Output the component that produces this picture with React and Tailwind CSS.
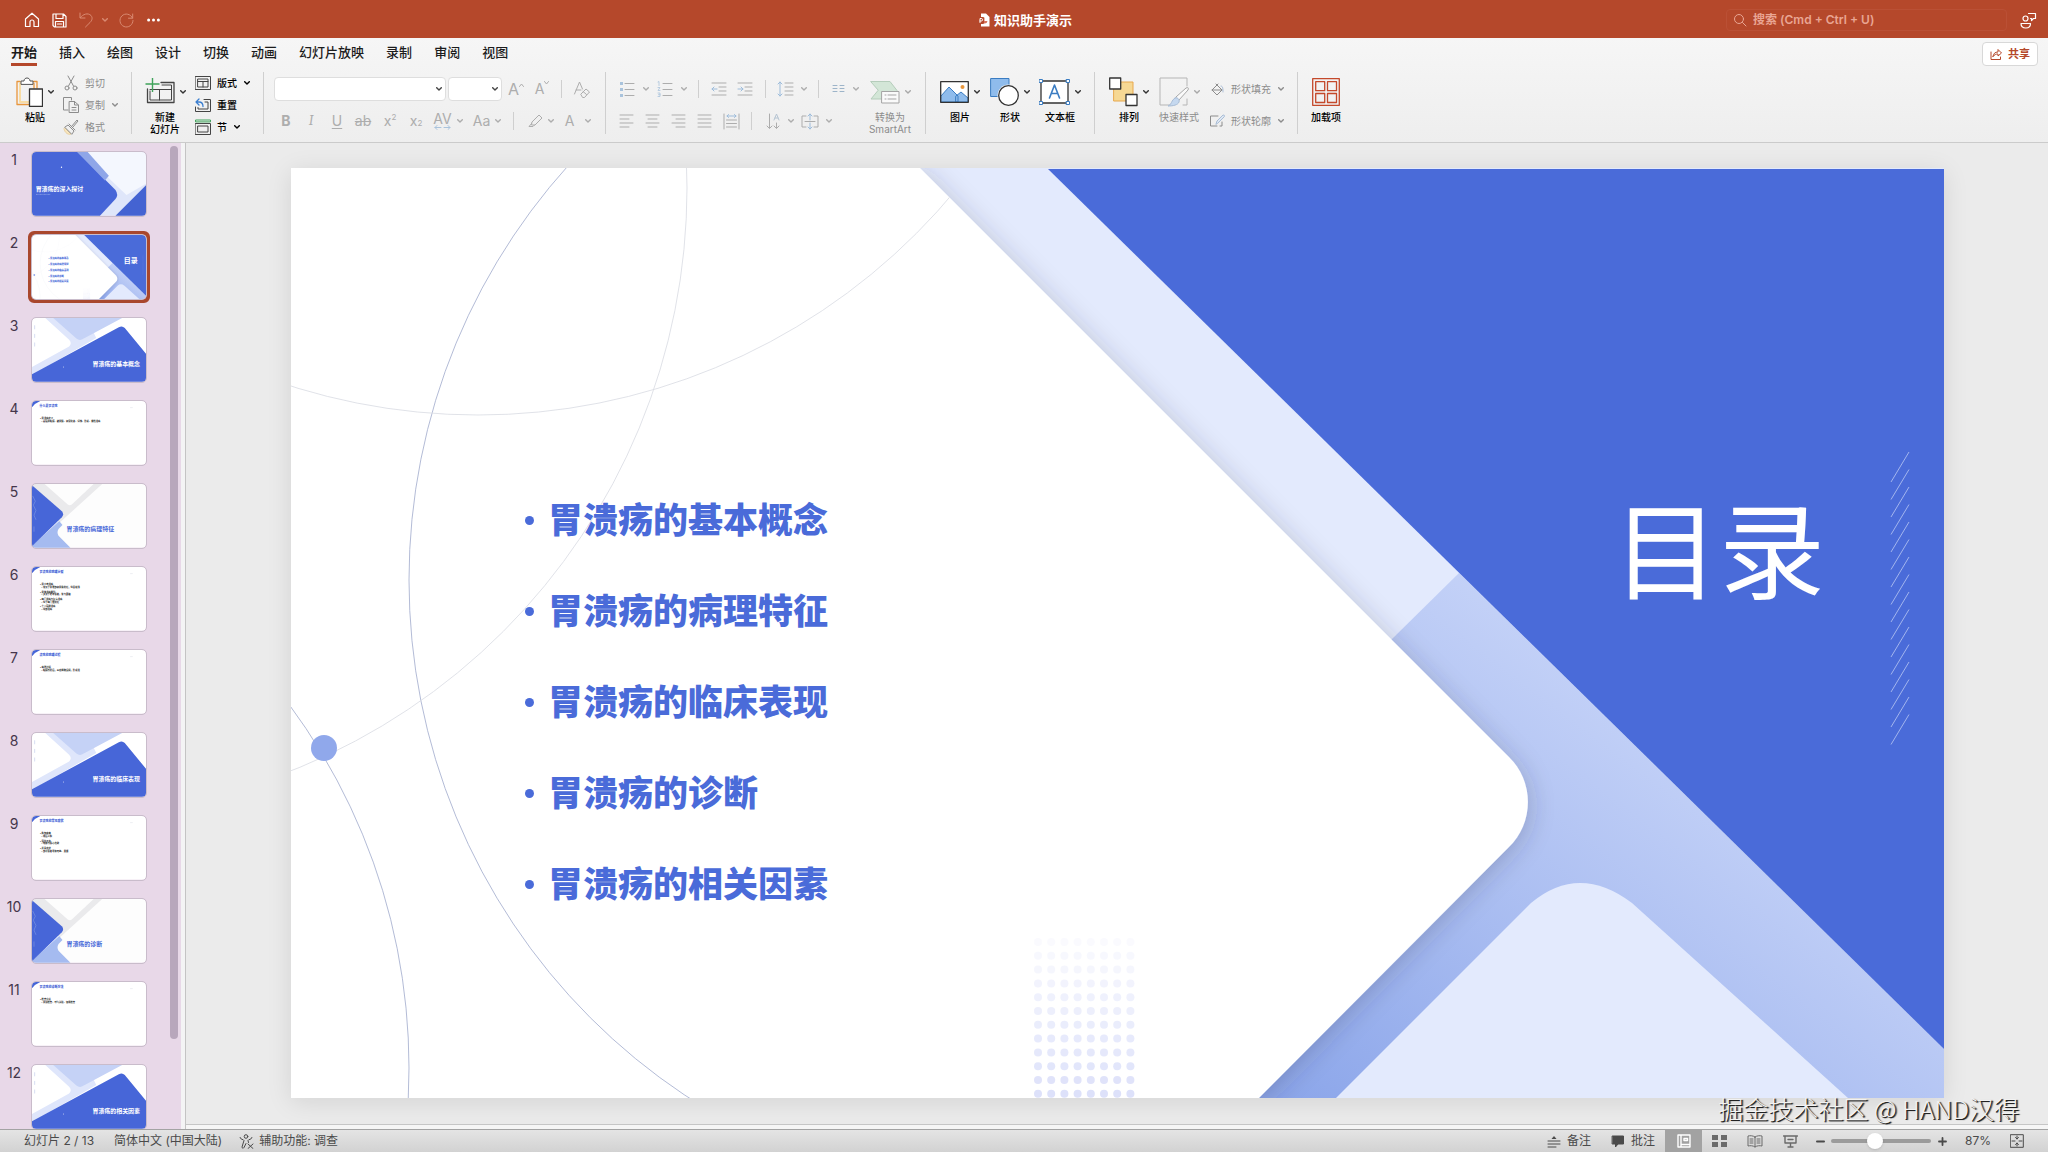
import React from "react";

const Svg = ({ w, h, className = "", children }) => (
  <svg
    width={w}
    height={h}
    viewBox={`0 0 ${w} ${h}`}
    fill="none"
    stroke="currentColor"
    strokeLinecap="round"
    strokeLinejoin="round"
    aria-hidden="true"
    className={`shrink-0 ${className}`}
  >
    {children}
  </svg>
);

const Chevron = ({ className = "" }) => (
  <Svg w={6} h={4} className={className}>
    <path d="M.7.7 3 3 5.3.7" strokeWidth="1.4" />
  </Svg>
);

const Divider = () => <div className="w-px h-[62px] shrink-0 bg-[#cfcfcf]" />;
const SmallDivider = ({ className = "" }) => <div className={`w-px h-[18px] shrink-0 bg-[#cfcfcf] ${className}`} />;

// Tall ribbon button: icon with an optional arrow, label underneath
const BigTool = ({ icon, label, arrow = true, disabled, className = "" }) => (
  <button
    type="button"
    disabled={disabled}
    className={`flex flex-col items-center shrink-0 pt-[5px] text-[10px] leading-3 ${disabled ? "text-[#8c8c8c]" : "text-black font-medium"} ${className}`}
  >
    <span className="flex items-center gap-[5px] h-[30px]">
      {icon}
      {arrow && <Chevron className={disabled ? "text-[#a8a8a8]" : "text-[#333]"} />}
    </span>
    <span className="mt-1 whitespace-pre-line">{label}</span>
  </button>
);

const RowTool = ({ icon, label, arrow, disabled, className = "" }) => (
  <button
    type="button"
    disabled={disabled}
    className={`flex items-center h-[22px] gap-[6px] text-[10px] leading-3 whitespace-nowrap ${disabled ? "text-[#8c8c8c]" : "text-black font-medium"} ${className}`}
  >
    {icon}
    <span>{label}</span>
    {arrow && <Chevron className="ml-px" />}
  </button>
);

const Tool = ({ label, className = "", children }) => (
  <button
    type="button"
    aria-label={label}
    disabled
    className={`flex items-center justify-center shrink-0 h-6 text-[14px] leading-4 text-[#adadad] ${className}`}
  >
    {children}
  </button>
);

const TitleBar = () => (
  <header className="relative flex items-center h-[38px] shrink-0 pt-[2px] bg-[#b5482b] text-white">
    <div className="flex items-center pl-6">
      <button type="button" aria-label="主页">
        <Svg w={16} h={16}>
          <path d="M1.5 7 8 1.2 14.500 7v7.500H10V10a2 2 0 0 0-4 0v4.500H1.500z" strokeWidth="1.2" />
        </Svg>
      </button>
      <button type="button" aria-label="保存" className="ml-3">
        <Svg w={15} h={15}>
          <path d="M1 1h10.500L14 3.500V14H2.500L1 12.500zM4 1v4.500h7V1M3.500 14V8.500h8V14M5.500 11h4" strokeWidth="1.200" />
        </Svg>
      </button>
      <button type="button" aria-label="撤消" className="ml-3 text-[#d98a72]">
        <Svg w={14} h={16}>
          <path d="M1 1v5h5M1.300 5.700C4 2 9 .5 12 3.500c2 2.500 1 5-1 7L6.500 15" />
        </Svg>
      </button>
      <button type="button" aria-label="撤消选项" className="ml-[9px] text-[#d98a72]">
        <Chevron />
      </button>
      <button type="button" aria-label="恢复" className="ml-[11px] text-[#d98a72]">
        <Svg w={15} h={15}>
          <path d="M13.500 5A6.500 6.500 0 1 0 14 7.500M13.700 1v4.200H9.500" />
        </Svg>
      </button>
      <button type="button" aria-label="更多" className="ml-[13px]">
        <Svg w={13} h={4}>
          <g fill="currentColor" stroke="none">
            <circle cx="1.600" cy="2" r="1.500" />
            <circle cx="6.500" cy="2" r="1.500" />
            <circle cx="11.400" cy="2" r="1.500" />
          </g>
        </Svg>
      </button>
    </div>
    <h1 className="absolute inset-x-0 top-[10px] flex items-center justify-center gap-1 pl-[2px] text-[13px] leading-5 font-bold pointer-events-none">
      <Svg w={12} h={14}>
        <path d="M3 .5h5L11.500 4v9.500H3z" fill="#fff" stroke="none" />
        <path d="M6.500 4.500a3 3 0 1 0 3 3.500h-3z" fill="#d9735a" stroke="none" />
        <rect y="4" width="6" height="7" rx="1" fill="#b5482b" stroke="none" />
        <path d="M2 9.500v-4h1.300a1.200 1.200 0 0 1 0 2.500H2" stroke="#fff" strokeWidth="1" />
      </Svg>
      知识助手演示
    </h1>
    <label className="ml-auto mr-[13px] flex items-center w-[281px] h-[22px] pl-[6px] gap-[6px] rounded border border-[#ba5035] text-[#e9a593]">
      <Svg w={14} h={14}>
        <circle cx="6" cy="6" r="4.500" />
        <path d="m9.500 9.500 3.500 3.500" />
      </Svg>
      <input
        type="search"
        aria-label="搜索"
        placeholder="搜索 (Cmd + Ctrl + U)"
        className="flex-1 min-w-0 bg-transparent outline-none text-[12px] font-semibold placeholder:text-[#e9a593]"
      />
    </label>
    <button type="button" aria-label="账户" className="mr-[11px]">
      <Svg w={17} h={17}>
        <path d="M8.500 1.500h7v5h-2l-2 2V6.500h-1M1 11.500h9.500c0 3-2 4.500-4.700 4.500S1 14.500 1 11.500z" strokeWidth="1.200" />
        <circle cx="5.500" cy="6.500" r="2.500" strokeWidth="1.200" />
      </Svg>
    </button>
  </header>
);

const tabs = ["开始", "插入", "绘图", "设计", "切换", "动画", "幻灯片放映", "录制", "审阅", "视图"];

const TabBar = () => (
  <nav className="flex items-start h-[30px] pl-[11px] pr-[10px] pt-1">
    <div className="flex gap-[22px]">
      {tabs.map((tab, i) => (
        <a
          key={tab}
          href="#"
          className={`h-6 text-[13px] leading-5 text-[#1c1c1c] border-b-[3px] ${i === 0 ? "font-bold border-[#b5482b]" : "font-medium border-transparent"}`}
        >
          {tab}
        </a>
      ))}
    </div>
    <button
      type="button"
      className="ml-auto flex items-center justify-center gap-[6px] w-14 h-6 bg-white border border-[#d8d8d8] rounded text-[11px] leading-4 font-bold text-[#b5482b]"
    >
      <Svg w={12} h={12}>
        <path d="M1 4v7.500h9.500V9M3 8.500C3.500 5.500 5 4 8 4V1.500L11.500 5 8 8V6C6 6 4.500 6.500 3 8.500z" />
      </Svg>
      共享
    </button>
  </nav>
);

const lineSets = {
  left: "M1 2h13M1 6h9M1 10h13M1 14h9",
  center: "M1 2h13M3 6h9M1 10h13M3 14h9",
  right: "M1 2h13M5 6h9M1 10h13M5 14h9",
  full: "M1 2h13M1 6h13M1 10h13M1 14h13",
};

const Lines = ({ kind }) => (
  <Svg w={15} h={16}>
    <path d={lineSets[kind]} />
  </Svg>
);

const ClipboardGroup = () => (
  <div className="flex w-[131px] pl-[16px]">
    <BigTool
      label="粘贴"
      className="w-[38px]"
      icon={
        <Svg w={27} h={30}>
          <path d="M4 4.500H1v23h12" stroke="#e8963c" strokeWidth="1.300" />
          <path d="M4 6v19h9" stroke="#f8dca4" strokeWidth="2" />
          <path d="M17 4.500h4V11M18 6.500V11" stroke="#e8963c" strokeWidth="1.300" />
          <path d="M5 7V4h3c0-4 6-4 6 0h3v3z" fill="#fff" stroke="#555" />
          <path d="M13.500 12h13v17.500h-13z" fill="#fff" stroke="#333" strokeWidth="1.300" />
        </Svg>
      }
    />
    <div className="ml-[9px]">
      <RowTool
        disabled
        label="剪切"
        icon={
          <Svg w={16} h={16}>
            <path d="m5 1 5.500 10M11 1 5.500 11" />
            <circle cx="4" cy="13" r="2" />
            <circle cx="12" cy="13" r="2" />
          </Svg>
        }
      />
      <RowTool
        disabled
        arrow
        label="复制"
        icon={
          <Svg w={16} h={16}>
            <path d="M5 13H.5V.5h8V3M6.500 4.500h5L15.500 8v7.500h-9zM11.500 4.500V8h4M9 10.500h4M9 13h4" />
          </Svg>
        }
      />
      <RowTool
        disabled
        label="格式"
        icon={
          <Svg w={16} h={16}>
            <path d="m2 9 6 6c-3 1-6-1-7-5z" fill="#f8e6bd" stroke="#e8cfa0" />
            <path d="m2 8 3-2 6 6-2 3zM6 5l6 6M8.500 7.500 14 1l1 1-5 6" />
          </Svg>
        }
      />
    </div>
  </div>
);

const SlidesGroup = () => (
  <div className="flex w-[131px] pl-[12px]">
    <BigTool
      label={"新建\n幻灯片"}
      className="w-[42px]"
      icon={
        <Svg w={30} h={30} className="text-[#444]">
          <path d="M16 5.500h13v20H2.500V12" strokeWidth="1.300" />
          <path d="M17 8h9.500v15H5V14M5 12.500h21.500M14.500 12.500V23" />
          <path d="M7.500 1v14M.5 7h14" stroke="#3fa35a" strokeWidth="1.400" strokeLinecap="butt" />
        </Svg>
      }
    />
    <div className="ml-[9px]">
      <RowTool
        arrow
        label="版式"
        icon={
          <Svg w={16} h={14} className="text-[#444]">
            <path d="M.5.5h15v13H.5zM3 3h10v8H3zM3 5.500h10M8 5.500V11" />
          </Svg>
        }
      />
      <RowTool
        label="重置"
        icon={
          <Svg w={16} h={14} className="text-[#444]">
            <path d="M9 1.500h6.500v12H.5V9M10 4h3v7H3V9.500" />
            <path d="M4 1 1 4l3 3M1 4h3c3 0 4 1.500 4 4.500" stroke="#3c7fd0" strokeWidth="1.300" />
          </Svg>
        }
      />
      <RowTool
        arrow
        label="节"
        icon={
          <Svg w={16} h={16} className="text-[#444]">
            <path d="M.5 2.500V1h15v1.500z" stroke="#3fa35a" />
            <path d="M.5 4.500h15v11H.5zM3 7h10v6H3z" />
          </Svg>
        }
      />
    </div>
  </div>
);

const FontGroup = () => (
  <div className="w-[341px] pl-[10px] pt-px">
    <div className="flex items-center h-8">
      <div className="relative w-[172px]">
        <select aria-label="字体" className="appearance-none block w-full h-6 bg-white border border-[#dedede] rounded-sm" />
        <Chevron className="absolute right-1 top-[10px] text-[#444]" />
      </div>
      <div className="relative w-[54px] ml-[2px]">
        <select aria-label="字号" className="appearance-none block w-full h-6 bg-white border border-[#dedede] rounded-sm" />
        <Chevron className="absolute right-1 top-[10px] text-[#444]" />
      </div>
      <Tool label="增大字号" className="w-7 text-[16px]">
        A<Svg w={5} h={4} className="mb-2"><path d="m.5 3.500 2-2.500 2 2.500" /></Svg>
      </Tool>
      <Tool label="减小字号" className="w-6">
        A<Svg w={5} h={4} className="mb-3"><path d="m.5.5 2 2.500 2-2.500" /></Svg>
      </Tool>
      <SmallDivider className="ml-[7px]" />
      <Tool label="清除格式" className="ml-[11px] w-[18px]">
        <Svg w={18} h={17}>
          <path d="M1.500 13 6.500 1l3 7M3 9h5M8 13l5-5 3.500 3-5 5.500H10zM10 10.500l3.500 3" />
        </Svg>
      </Tool>
    </div>
    <div className="flex items-center h-8">
      <Tool label="加粗" className="w-6 font-bold">B</Tool>
      <Tool label="倾斜" className="w-[26px] italic font-serif">I</Tool>
      <Tool label="下划线" className="w-[26px] underline underline-offset-2">U</Tool>
      <Tool label="删除线" className="w-[26px] text-[13px] line-through">ab</Tool>
      <Tool label="上标" className="w-7">x<sup className="text-[8px]">2</sup></Tool>
      <Tool label="下标" className="w-6">x<sub className="text-[8px]">2</sub></Tool>
      <Tool label="字符间距" className="w-[40px] gap-[5px] text-[12px]">
        <span className="flex flex-col items-center leading-3">
          AV
          <Svg w={17} h={5} className="text-[#a9c3dc]"><path d="M1 2.500h6M3 .5l-2 2 2 2M10 2.500h6M14 .5l2 2-2 2" /></Svg>
        </span>
        <Chevron />
      </Tool>
      <Tool label="更改大小写" className="w-[38px] gap-[5px]">Aa<Chevron /></Tool>
      <SmallDivider className="ml-[7px]" />
      <Tool label="突出显示" className="w-[38px] ml-2 gap-[5px]">
        <Svg w={15} h={14}>
          <path d="m4 8 7-7 3 3-7 7H4zM4 9l-3 3.500h4L6.500 11" />
        </Svg>
        <Chevron />
      </Tool>
      <Tool label="字体颜色" className="w-9 gap-[11px]">A<Chevron /></Tool>
    </div>
  </div>
);

const ParagraphGroup = () => (
  <div className="flex w-[319px] pl-[13px]">
    <div className="w-[246px] pt-px">
      <div className="flex items-center h-8">
        <Tool label="项目符号" className="gap-2">
          <Svg w={16} h={16}>
            <path d="M6 2.500h9M6 8.500h9M6 14.500h9" />
            <g fill="#a9c3dc" stroke="none"><path d="M1 1h3v3H1zM1 7h3v3H1zM1 13h3v3H1z" /></g>
          </Svg>
          <Chevron />
        </Tool>
        <Tool label="编号" className="gap-2 ml-2">
          <Svg w={16} h={16}>
            <path d="M6 2.500h9M6 8.500h9M6 14.500h9" />
            <path d="m1 1 1-.5v4M1 6.500h2L1 9.500h2M1 12h2v3.500H1M1.500 13.700H3" stroke="#a9c3dc" strokeWidth=".8" />
          </Svg>
          <Chevron />
        </Tool>
        <SmallDivider className="ml-[11px]" />
        <Tool label="减少缩进" className="ml-3">
          <Svg w={16} h={16}>
            <path d="M1 2h14M8 6h7M8 10h7M1 14h14" />
            <path d="M6 8H1M3 6 1 8l2 2" stroke="#9dbcdb" />
          </Svg>
        </Tool>
        <Tool label="增加缩进" className="ml-[10px]">
          <Svg w={16} h={16}>
            <path d="M1 2h14M8 6h7M8 10h7M1 14h14" />
            <path d="M1 8h5M4 6l2 2-2 2" stroke="#9dbcdb" />
          </Svg>
        </Tool>
        <SmallDivider className="ml-3" />
        <Tool label="行距" className="gap-[7px] ml-[11px]">
          <Svg w={17} h={16}>
            <path d="M8 2h8M8 6h8M8 10h8M8 14h8" />
            <path d="M3 1v14M1 3l2-2 2 2M1 13l2 2 2-2" stroke="#9dbcdb" />
          </Svg>
          <Chevron />
        </Tool>
        <SmallDivider className="ml-[11px]" />
        <Tool label="分栏" className="gap-2 ml-[13px]">
          <Svg w={13} h={10}>
            <path d="M1 1.500h4M1 4.500h4M1 7.500h4M8 1.500h4M8 4.500h4M8 7.500h4" stroke="#9db4c9" />
          </Svg>
          <Chevron />
        </Tool>
      </div>
      <div className="flex items-center h-8">
        <Tool label="左对齐"><Lines kind="left" /></Tool>
        <Tool label="居中" className="ml-[11px]"><Lines kind="center" /></Tool>
        <Tool label="右对齐" className="ml-[11px]"><Lines kind="right" /></Tool>
        <Tool label="两端对齐" className="ml-[11px]"><Lines kind="full" /></Tool>
        <Tool label="分散对齐" className="ml-[11px]">
          <Svg w={17} h={17}>
            <path d="M1 1v15M16 1v15M3.500 7h10M3.500 10.500h10M3.500 14h10" />
            <path d="M4 3h9M5.500 1.500 4 3l1.500 1.500M11.500 1.500 13 3l-1.500 1.500" stroke="#9dbcdb" />
          </Svg>
        </Tool>
        <SmallDivider className="ml-[11px]" />
        <Tool label="文字方向" className="gap-[7px] ml-[14px]">
          <Svg w={15} h={17}>
            <path d="M3.500 1v14M1 13l2.500 2.500L6 13M10.500 10v5M8 13l2.500 2.500L13 13" />
            <path d="m8 7 2.500-6L13 7M9 5h3" stroke="#b5c4d2" />
          </Svg>
          <Chevron />
        </Tool>
        <Tool label="对齐文本" className="gap-[7px] ml-[7px]">
          <Svg w={18} h={17}>
            <path d="M5 3H1v11h4M13 3h4v11h-4M4 8.500h10" />
            <path d="M9 1v6M7 3l2-2 2 2M9 10v6M7 14l2 2 2-2" stroke="#9dbcdb" />
          </Svg>
          <Chevron />
        </Tool>
      </div>
    </div>
    <BigTool
      disabled
      label={"转换为\nSmartArt"}
      className="w-[50px]"
      icon={
        <Svg w={30} h={24}>
          <path d="M1 1.500h19l7 9-7 8.500H1l7-8.500z" fill="#d3e6d7" stroke="#b5cdbb" />
          <path d="M12 11.500h17V23H12z" fill="#fafafa" stroke="#a5a5a5" />
          <path d="M15 15h1M18 15h8M15 19h1M18 19h8" stroke="#a5a5a5" />
        </Svg>
      }
    />
  </div>
);

const InsertGroup = () => (
  <div className="flex w-[168px] pl-[13px]">
    <BigTool
      label="图片"
      className="w-[42px]"
      icon={
        <Svg w={29} h={22}>
          <path d="M.7.7h27.600v20.600H.7z" fill="#fff" stroke="none" />
          <path d="m1 15 8-9 9 9v6H1zM16 15l5-4 7 6v4H16z" fill="#8fbcec" stroke="#3a7cc2" />
          <circle cx="22.500" cy="6" r="2" fill="#e8963c" stroke="none" />
          <path d="M.7.7h27.600v20.600H.7z" stroke="#333" strokeWidth="1.300" />
        </Svg>
      }
    />
    <BigTool
      label="形状"
      className="w-[42px] ml-2"
      icon={
        <Svg w={29} h={30}>
          <path d="M1 1.500h18v18H1z" fill="#8fbcec" stroke="#3a7cc2" />
          <circle cx="18.500" cy="18.500" r="11" fill="#f2f2f2" stroke="none" />
          <circle cx="18.500" cy="18.500" r="9.800" fill="#fff" stroke="#333" strokeWidth="1.300" />
        </Svg>
      }
    />
    <BigTool
      label="文本框"
      className="w-[44px] ml-[7px]"
      icon={
        <Svg w={31} h={26}>
          <path d="M2 2h27v22H2z" fill="#fff" stroke="#333" strokeWidth="1.300" />
          <path d="m10.500 19 5-13 5 13M12.500 14.500h6" stroke="#3a7cc2" strokeWidth="1.600" />
          <path d="M.5.5h3v3h-3zM27.500.5h3v3h-3zM.5 22.500h3v3h-3zM27.500 22.500h3v3h-3z" fill="#fff" stroke="#3a7cc2" />
        </Svg>
      }
    />
  </div>
);

const DrawingGroup = () => (
  <div className="flex w-[202px] pl-[13px]">
    <BigTool
      label="排列"
      className="w-[42px]"
      icon={
        <Svg w={29} h={30}>
          <path d="M5 5h19v19H5z" fill="#f6d894" stroke="#e8a84c" />
          <path d="M.7 1h11v11H.7zM17 17.500h11v11H17z" fill="#fff" stroke="#333" strokeWidth="1.300" />
        </Svg>
      }
    />
    <BigTool
      disabled
      label="快速样式"
      className="w-[42px] ml-2"
      icon={
        <Svg w={30} h={30}>
          <path d="M14 28H1V1h27v8M28 22v6h-4" stroke="#b5b5b5" />
          <path d="M17 20 27 11c2-1 3 0 2 2l-9 10z" fill="#fafafa" stroke="#a8a8a8" />
          <path d="M16 21c2-1 5 1 4 4-1 3-6 4-11 4 4-1 3-6 7-8z" fill="#c5d8ef" stroke="#a9bdd6" />
        </Svg>
      }
    />
    <div className="ml-[10px] pt-px">
      <div className="flex items-center h-8">
        <RowTool
          disabled
          arrow
          label="形状填充"
          icon={
            <Svg w={15} h={14}>
              <path d="m6 2 6 6-5 5-5-5 6-6M2 8h10" />
              <path d="M11 4c2 0 2 3 2 6" stroke="#a9bdd6" />
            </Svg>
          }
        />
      </div>
      <div className="flex items-center h-8">
        <RowTool
          disabled
          arrow
          label="形状轮廓"
          icon={
            <Svg w={15} h={14}>
              <path d="M8 2H.5v10H7M12 8v4h-2" />
              <path d="m6 10 1-3 6-6c2 0 2 1 1 2L8 9z" fill="#dfe8f3" stroke="#a9bdd6" />
            </Svg>
          }
        />
      </div>
    </div>
  </div>
);

const Ribbon = () => (
  <section className="shrink-0 h-[105px] bg-linear-to-b from-[#f6f6f6] to-[#eeeeee] border-b border-[#cbcbcb]">
    <TabBar />
    <div className="flex items-start pt-1 h-[70px]">
      <ClipboardGroup />
      <Divider />
      <SlidesGroup />
      <Divider />
      <FontGroup />
      <Divider />
      <ParagraphGroup />
      <Divider />
      <InsertGroup />
      <Divider />
      <DrawingGroup />
      <Divider />
      <BigTool
        label="加载项"
        arrow={false}
        className="w-14"
        icon={
          <Svg w={28} h={28} className="text-[#c4492b]">
            <path d="M.7.7h26.600v26.600H.7zM3.700 3.700h9v9h-9zM15.500 3.700h9v9h-9zM3.700 15.500h9v9h-9zM15.500 15.500h9v9h-9z" strokeWidth="1.300" />
          </Svg>
        }
      />
    </div>
  </section>
);

const agenda = ["胃溃疡的基本概念", "胃溃疡的病理特征", "胃溃疡的临床表现", "胃溃疡的诊断", "胃溃疡的相关因素"];

const PANEL = "M0 0H629L1218 589A63 63 0 0 1 1218 679L968 930H0Z";

const AgendaArt = ({ id, children }) => (
  <svg viewBox="0 0 1653 930" className="block w-full h-auto" aria-hidden="true">
    <defs>
      <linearGradient id={`${id}-band`} gradientUnits="userSpaceOnUse" x1="1330" y1="480" x2="990" y2="930">
        <stop offset="0" stopColor="#c7d4f8" />
        <stop offset="1" stopColor="#8ca6ea" />
      </linearGradient>
      <clipPath id={`${id}-clip`}>
        <path d={PANEL} />
      </clipPath>
      <filter id={`${id}-shadow`} x="-5%" y="-5%" width="110%" height="110%">
        <feDropShadow dx="2" dy="4" stdDeviation="12" floodColor="#30344c" floodOpacity=".24" />
      </filter>
    </defs>
    <rect width="1653" height="930" fill="#e3eafd" />
    <path d="M1100 472 1168 405 1653 881V930H900Z" fill={`url(#${id}-band)`} />
    <path d="M757 1H1653V881Z" fill="#4a6bd9" />
    <path d={PANEL} fill="#fff" filter={`url(#${id}-shadow)`} />
    <path d="M1045 930 1240 735Q1288 695 1341 735L1557 930Z" fill="#e3eafd" />
    <g fill="none" clipPath={`url(#${id}-clip)`} strokeWidth=".8">
      <circle cx="737" cy="412" r="619" stroke="#a0aacb" />
      <circle cx="-493" cy="900" r="611" stroke="#a0aacb" />
      <circle cx="187" cy="-373" r="620" stroke="#d8dae2" />
      <circle cx="-231" cy="20" r="627" stroke="#d8dae2" />
    </g>
    <circle cx="33" cy="580" r="13" fill="#90a8eb" />
    {Array.from({ length: 12 }, (_, row) =>
      Array.from({ length: 8 }, (_, col) => (
        <circle key={`${row}-${col}`} cx={747 + col * 13.2} cy={774 + row * 13.800} r="4" fill="#dde1fa" opacity={(row + 2) / 13} />
      ))
    )}
    {Array.from({ length: 16 }, (_, i) => (
      <path key={i} d={`M1618 ${284 + i * 17.500}l-18 30`} stroke="#a3b5ee" />
    ))}
    {children}
  </svg>
);

const CoverArt = ({ title }) => (
  <>
    <rect width="344" height="192" fill="#dfe6fa" />
    <path d="M165 0H344V96L285 130 175 25Z" fill="#f4f7fe" />
    <path d="M0 0H137L252 115Q262 130 252 142L205 192H0Z" fill="#4766d8" />
    <path d="M137 0H168L232 72 220 86Z" fill="#8fa6e8" />
    <path d="M344 100V192H252Z" fill="#4463d2" />
    <circle cx="89" cy="46" r="2" fill="#fff" />
    <text x="11" y="118" fontSize="18" fontWeight="700" fill="#fff">{title}</text>
    <path d="M12 128h44" stroke="#b9c6f2" strokeWidth="1.500" strokeDasharray="3 1" />
  </>
);

const ChapterArt = ({ title }) => (
  <>
    <rect width="344" height="192" fill="#fff" />
    <path d="M40 0H66L150 64 185 42 194 60 0 172V148L112 86Q122 77 112 66Z" fill="#dfe6fb" />
    <path d="M64 0H272L152 64Q143 69 134 62Z" fill="#c5d2f6" />
    <path d="M0 170 262 28Q272 22 280 30L344 108V192H0Z" fill="#4766d8" />
    <path d="M8 22v12M8 48v12M8 74v12" stroke="#d8def2" strokeWidth="3" />
    <circle cx="95" cy="148" r="1.500" fill="#fff" />
    <text x="326" y="146" fontSize="18" fontWeight="700" fill="#fff" textAnchor="end">{title}</text>
  </>
);

const SectionArt = ({ title }) => (
  <>
    <rect width="344" height="192" fill="#fdfdfd" />
    <path d="M0 0H38L108 62Q114 67 120 62L186 0H212L84 116 0 20Z" fill="#eaeaec" />
    <path d="M0 186 82 112 92 124 80 136Q74 146 80 156L116 192H0Z" fill="#a5bbf0" />
    <path d="M0 4 90 82Q98 91 90 100L0 188Z" fill="#4766d8" />
    <path d="m2 36 8 16-6 12 8 16-6 14 6 14M6 128v16" stroke="#7d95e4" strokeWidth="2" fill="none" />
    <text x="104" y="142" fontSize="18" fontWeight="700" fill="#4a6bd9">{title}</text>
  </>
);

const ContentArt = ({ title, lines }) => (
  <>
    <rect width="344" height="192" fill="#fff" />
    <path d="M0 0H25Q10 6 0 19Z" fill="#4766d8" />
    <text x="23" y="19" fontSize="9" fontWeight="900" fill="#3f60d6">{title}</text>
    <path d="M296 20h8" stroke="#c8cbd6" />
    {lines.map((line, i) => (
      <text key={i} x={i % 2 ? 28 : 24} y={55 + Math.floor(i / 2) * 22 + (i % 2) * 9} fontSize="7" fontWeight="700" fill="#222">
        {i % 2 ? "– " : "• "}
        {line}
      </text>
    ))}
  </>
);

const AgendaThumb = () => (
  <AgendaArt id="thumb">
    {agenda.map((item, i) => (
      <text key={item} x="240" y={348 + i * 85} fontSize="34" fontWeight="900" fill="#4a6bd9">• {item}</text>
    ))}
    <text x="1330" y="410" fontSize="102" fontWeight="700" fill="#fff">目录</text>
  </AgendaArt>
);

const slides = [
  { kind: CoverArt, title: "胃溃疡的深入探讨" },
  { kind: AgendaThumb, title: "目录" },
  { kind: ChapterArt, title: "胃溃疡的基本概念" },
  { kind: ContentArt, title: "什么是胃溃疡", lines: ["胃溃疡定义", "是指胃黏膜、被胃酸、和消化液、侵蚀、形成、慢性溃疡"] },
  { kind: SectionArt, title: "胃溃疡的病理特征" },
  {
    kind: ContentArt,
    title: "胃溃疡的病理分型",
    lines: ["胃小弯溃疡", "常见于胃窦部和胃角附近，位置较浅", "胃体溃疡类型", "多见于老年患者，常与萎缩", "幽门溃疡与复合溃疡", "位于幽门管附近", "十二指肠溃疡", "球部溃疡"],
  },
  { kind: ContentArt, title: "溃疡的病理过程", lines: ["病理过程", "黏膜受损后，炎症细胞浸润，形成溃"] },
  { kind: ChapterArt, title: "胃溃疡的临床表现" },
  {
    kind: ContentArt,
    title: "胃溃疡的常见症状",
    lines: ["腹部疼痛", "餐后上腹", "消化不良", "饱胀与恶心食欲", "并发症状", "部分患者可有呕血、黑便"],
  },
  { kind: SectionArt, title: "胃溃疡的诊断" },
  { kind: ContentArt, title: "胃溃疡的诊断方法", lines: ["检查方法", "胃镜检查、呼气试验、钡餐检查"] },
  { kind: ChapterArt, title: "胃溃疡的相关因素" },
];

const ThumbnailPane = () => (
  <aside className="relative w-[181px] shrink-0 overflow-hidden bg-[#e8d8e8]">
    <ol className="pt-[9px]">
      {slides.map(({ kind: Art, title, lines }, i) => {
        const active = i === 1;
        return (
          <li key={i} className="flex items-start h-[83px]">
            <span className="w-7 shrink-0 text-center text-[14px] leading-4 text-[#45364b]">{i + 1}</span>
            <button
              type="button"
              aria-label={title}
              className={`w-[122px] shrink-0 -mt-1 rounded-md border-4 ${active ? "border-[#a9472d]" : "border-transparent"}`}
            >
              <span className="block rounded overflow-hidden outline outline-[#c9bccb]">
                {active ? (
                  <Art />
                ) : (
                  <svg viewBox="0 0 344 192" className="block w-full h-auto" aria-hidden="true">
                    <Art title={title} lines={lines} />
                  </svg>
                )}
              </span>
            </button>
          </li>
        );
      })}
    </ol>
    <div className="absolute right-[3px] top-[3px] w-2 h-[893px] rounded-full bg-[#b8a7bc]" />
  </aside>
);

const Slide = () => (
  <article className="relative bg-white shadow-[0_4px_24px_rgba(0,0,0,0.1)]">
    <AgendaArt id="slide" />
    <div className="absolute inset-0 flex items-start">
      <ul className="ml-[234px] mt-[329px] flex-1 text-[35px] leading-[46px] font-black text-[#4a6bd9]">
        {agenda.map((item) => (
          <li key={item} className="flex items-center gap-[14px] mb-[45px]">
            <span className="w-[9px] h-[9px] rounded-full bg-[#4a6bd9]" />
            {item}
          </li>
        ))}
      </ul>
      <h2 className="mr-[119px] mt-[325px] text-[106px] leading-[120px] text-white">目录</h2>
    </div>
  </article>
);

const StatusBar = () => (
  <footer className="flex items-center h-[23px] shrink-0 border-t border-[#a3a3a3] bg-linear-to-b from-[#e4e4e4] to-[#d2d2d2] text-[12px] leading-4 text-[#4a4a4a] whitespace-nowrap">
    <span className="pl-6">幻灯片 2 / 13</span>
    <button type="button" className="ml-5">简体中文 (中国大陆)</button>
    <button type="button" className="flex items-center gap-[5px] ml-[17px]">
      <Svg w={15} h={15}>
        <circle cx="7" cy="2.500" r="1.800" />
        <path d="M1 3.500c0 2 4 2 4 3L3 13c0 1.500 1.500 1.500 2 .5l2-4M13 3.500c0 2-4 2-4 3l.5 2M9 10l5 4.500M14 10l-5 4.500" />
      </Svg>
      辅助功能: 调查
    </button>
    <button type="button" className="flex items-center gap-[6px] ml-auto">
      <Svg w={14} h={13}>
        <path d="M1 6h12M1 9h12M1 12h8" />
        <path d="m4.500 4 2.500-3 2.500 3z" fill="currentColor" stroke="none" />
      </Svg>
      备注
    </button>
    <button type="button" className="flex items-center gap-[6px] ml-5">
      <Svg w={14} h={13}>
        <path d="M1.500 1h11v8H7l-2.500 3V9h-3z" fill="currentColor" />
      </Svg>
      批注
    </button>
    <button type="button" aria-label="普通视图" className="flex items-center justify-center w-[37px] h-full ml-[10px] bg-[#a2a2a2] text-white">
      <Svg w={14} h={14}>
        <path d="M1 1h12v12H1zM4 1v12M4 10.500h9M7 4.500h3.500v2H7z" strokeWidth="1.400" />
      </Svg>
    </button>
    <button type="button" aria-label="幻灯片浏览" className="ml-[10px] text-[#6a6a6a]">
      <Svg w={15} h={12}>
        <path d="M0 0h6v5H0zM9 0h6v5H9zM0 7h6v5H0zM9 7h6v5H9z" fill="currentColor" stroke="none" />
      </Svg>
    </button>
    <button type="button" aria-label="阅读视图" className="ml-5 text-[#6a6a6a]">
      <Svg w={16} h={13}>
        <path d="M8 2C6 .5 3 .5 1 1v10c2-.5 5-.5 7 1 2-1.500 5-1.500 7-1V1c-2-.5-5-.5-7 1zv10M3 4h3M3 6h3M3 8h3M10 4h3M10 6h3M10 8h3" />
      </Svg>
    </button>
    <button type="button" aria-label="幻灯片放映" className="ml-5 text-[#6a6a6a]">
      <Svg w={15} h={13}>
        <path d="M.5 1h14M2 1v7h11V1M5 4.500h5M7.500 8v3M5 12h5" strokeWidth="1.400" />
      </Svg>
    </button>
    <button type="button" aria-label="缩小" className="ml-[18px]">
      <Svg w={9} h={9}><path d="M1 4.500h7" strokeWidth="2" /></Svg>
    </button>
    <input
      type="range"
      aria-label="缩放"
      min="0"
      max="100"
      defaultValue="43"
      className="appearance-none w-[100px] h-1 ml-[6px] rounded-full bg-[#9b9b9b] [&::-webkit-slider-thumb]:appearance-none [&::-webkit-slider-thumb]:size-4 [&::-webkit-slider-thumb]:rounded-full [&::-webkit-slider-thumb]:bg-white [&::-webkit-slider-thumb]:shadow"
    />
    <button type="button" aria-label="放大" className="ml-[7px]">
      <Svg w={9} h={9}><path d="M1 4.500h7M4.500 1v7" strokeWidth="1.800" /></Svg>
    </button>
    <span className="ml-[18px] w-7">87%</span>
    <button type="button" aria-label="适应窗口" className="ml-[17px] mr-6">
      <Svg w={14} h={14}>
        <path d="M.7.7h12.600v12.600H.7zM7 2v3M5.500 3.500 7 5l1.500-1.500M7 12V9M5.500 10.500 7 9l1.500 1.500M2 7h3M12 7H9" />
      </Svg>
    </button>
  </footer>
);

const App = () => {
  return (
    <div className="relative flex flex-col h-screen overflow-hidden bg-[#ebebeb] font-['Inter','Noto_Sans_CJK_SC',sans-serif]">
      <TitleBar />
      <Ribbon />
      <div className="flex flex-1 min-h-0">
        <ThumbnailPane />
        <div className="w-[5px] shrink-0 bg-[#f4f4f5] border-r border-[#c4c4c4]" />
        <main className="flex flex-col flex-1 min-w-0">
          <div className="flex-1 min-h-0 overflow-hidden pl-[105px] pr-[104px] pt-[25px]">
            <Slide />
          </div>
          <div className="h-[5px] shrink-0 border-t border-[#c6c6c6] bg-[#f6f6f6]" />
        </main>
      </div>
      <StatusBar />
      <p className="absolute right-[29px] bottom-[28px] font-['Noto_Sans_CJK_SC',sans-serif] text-[25px] leading-8 font-light text-[#f2f2f2] [text-shadow:1px_1px_0_#222,2px_1px_1px_#444]">
        掘金技术社区 @ HAND汉得
      </p>
    </div>
  );
};

export default App;
